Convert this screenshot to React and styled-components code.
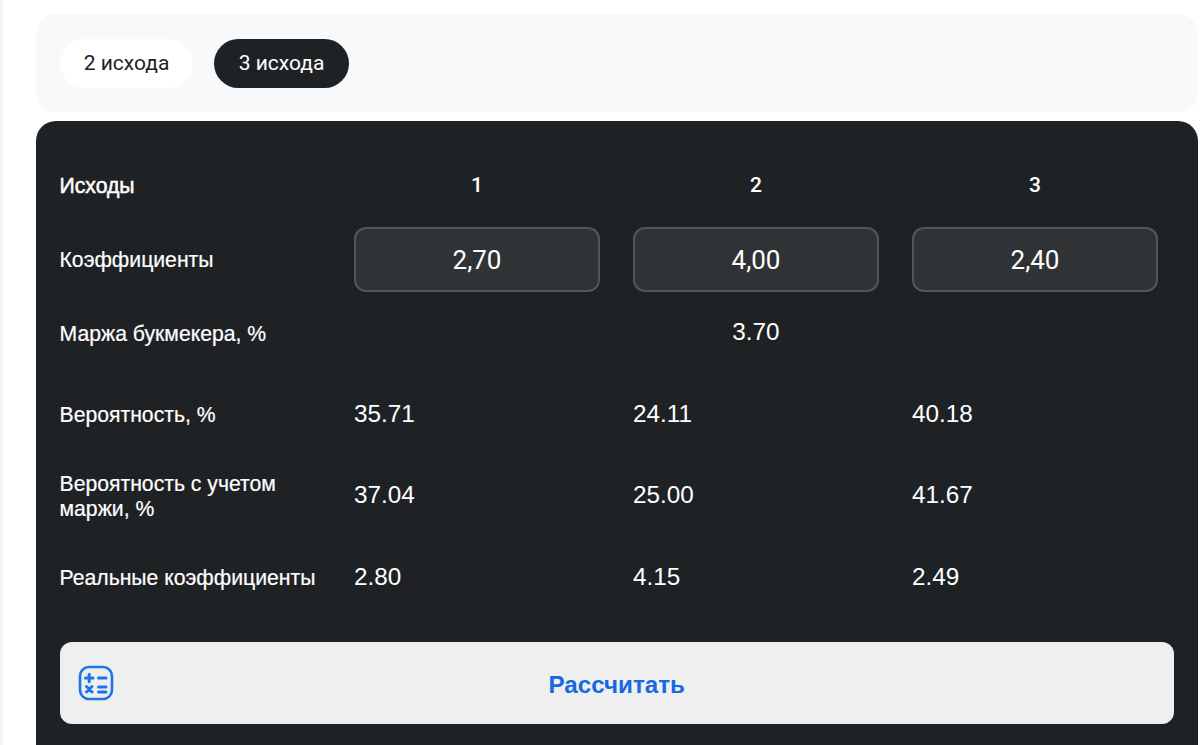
import React from "react";
import styled, { createGlobalStyle } from "styled-components";

const Global = createGlobalStyle`
  html, body { margin: 0; padding: 0; background: #fff; overflow: hidden; }
  body { font-family: "Liberation Sans", Arial, sans-serif; }
`;

const Page = styled.div`
  box-sizing: border-box;
  height: 745px;
  border-left: 3px solid #f3f4f6;
  padding: 14px 2px 0 33px;
  background: #fff;
  overflow: hidden;
`;

const TabsPanel = styled.div`
  box-sizing: border-box;
  height: 98px;
  display: flex;
  align-items: center;
  gap: 21px;
  padding: 0 24px;
  background: #f8f9fb;
  border-radius: 20px;
`;

const Tab = styled.button`
  height: 49px;
  width: ${(p) => (p.$active ? "135px" : "133px")};
  padding: 0;
  border: none;
  border-radius: 25px;
  background: ${(p) => (p.$active ? "#1f2225" : "#fff")};
  color: ${(p) => (p.$active ? "#fff" : "#1f2225")};
  font-family: Roboto, sans-serif;
  font-size: 21px;
`;

const CalcPanel = styled.div`
  box-sizing: border-box;
  height: 660px;
  margin-top: 9px;
  padding: 41px 24px 0 23.5px;
  background: #1f2225;
  border-radius: 20px;
`;

const Row = styled.div`
  display: grid;
  grid-template-columns: 261.5px repeat(3, 246px);
  column-gap: 33px;
  align-items: center;
  height: ${(p) => p.$height}px;
  margin-bottom: ${(p) => p.$after}px;
  color: #fff;
`;

const Label = styled.div`
  font-size: 21.2px;
  line-height: 25px;
  -webkit-text-stroke: ${(p) => (p.$bold ? "0.5px #fff" : "0.2px #fff")};
`;

const Head = styled.div`
  text-align: center;
  font-family: Roboto, sans-serif;
  font-weight: 500;
  font-size: 21px;
`;

const Value = styled.div`
  font-family: "Liberation Sans", sans-serif;
  font-size: 24.3px;
  margin-bottom: ${(p) => (p.$raise ? "2px" : "0")};
`;

const Margin = styled(Value)`
  grid-column: 2 / 5;
  text-align: center;
  margin-bottom: 2px;
`;

const OddsInput = styled.input`
  box-sizing: border-box;
  width: 246px;
  height: 65px;
  border: 2px solid #50565d;
  border-radius: 12px;
  background: #303336;
  color: #fff;
  text-align: center;
  font-family: Roboto, sans-serif;
  font-size: 26px;
  outline: none;
`;

const CalcButton = styled.button`
  position: relative;
  display: block;
  width: 1114.5px;
  height: 82px;
  margin-top: 43px;
  padding: 3px 0 0;
  border: none;
  border-radius: 12px;
  background: #efefef;
  color: #1668e3;
  font-family: "Liberation Sans", sans-serif;
  font-weight: 700;
  font-size: 24.2px;
`;

const IconSlot = styled.span`
  position: absolute;
  left: 18px;
  top: 23px;
  width: 36px;
  height: 36px;
`;

const CalcIcon = () => (
  <svg width="36" height="36" viewBox="0 0 36 36" fill="none" stroke="#1b74ea" strokeWidth="2.6" strokeLinecap="round">
    <rect x="2" y="2" width="32" height="32" rx="9" />
    <path d="M7.500 13h7.500M11.200 9.200v7.500M20.500 13h7.500M8.500 21.500l5.500 5.500M14 21.500l-5.500 5.500M20.500 22h7.500M20.500 27h7.500" strokeWidth="3" />
  </svg>
);

const rows = [
  { label: "Вероятность, %", values: ["35.71", "24.11", "40.18"], height: 44, after: 35 },
  { label: "Вероятность с учетом маржи, %", values: ["37.04", "25.00", "41.67"], height: 50, after: 34, raise: true },
  { label: "Реальные коэффициенты", values: ["2.80", "4.15", "2.49"], height: 44, after: 0 },
];

export default function App() {
  return (
    <Page>
      <Global />
      <TabsPanel>
        <Tab>2 исхода</Tab>
        <Tab $active>3 исхода</Tab>
      </TabsPanel>
      <CalcPanel>
        <Row $height={46} $after={19}>
          <Label $bold>Исходы</Label>
          <Head>1</Head>
          <Head>2</Head>
          <Head>3</Head>
        </Row>
        <Row $height={65} $after={19}>
          <Label>Коэффициенты</Label>
          <OddsInput defaultValue="2,70" />
          <OddsInput defaultValue="4,00" />
          <OddsInput defaultValue="2,40" />
        </Row>
        <Row $height={44} $after={37}>
          <Label>Маржа букмекера, %</Label>
          <Margin>3.70</Margin>
        </Row>
        {rows.map((r) => (
          <Row key={r.label} $height={r.height} $after={r.after}>
            <Label>{r.label}</Label>
            {r.values.map((v, i) => (
              <Value key={i} $raise={r.raise}>{v}</Value>
            ))}
          </Row>
        ))}
        <CalcButton>
          <IconSlot><CalcIcon /></IconSlot>
          Рассчитать
        </CalcButton>
      </CalcPanel>
    </Page>
  );
}
